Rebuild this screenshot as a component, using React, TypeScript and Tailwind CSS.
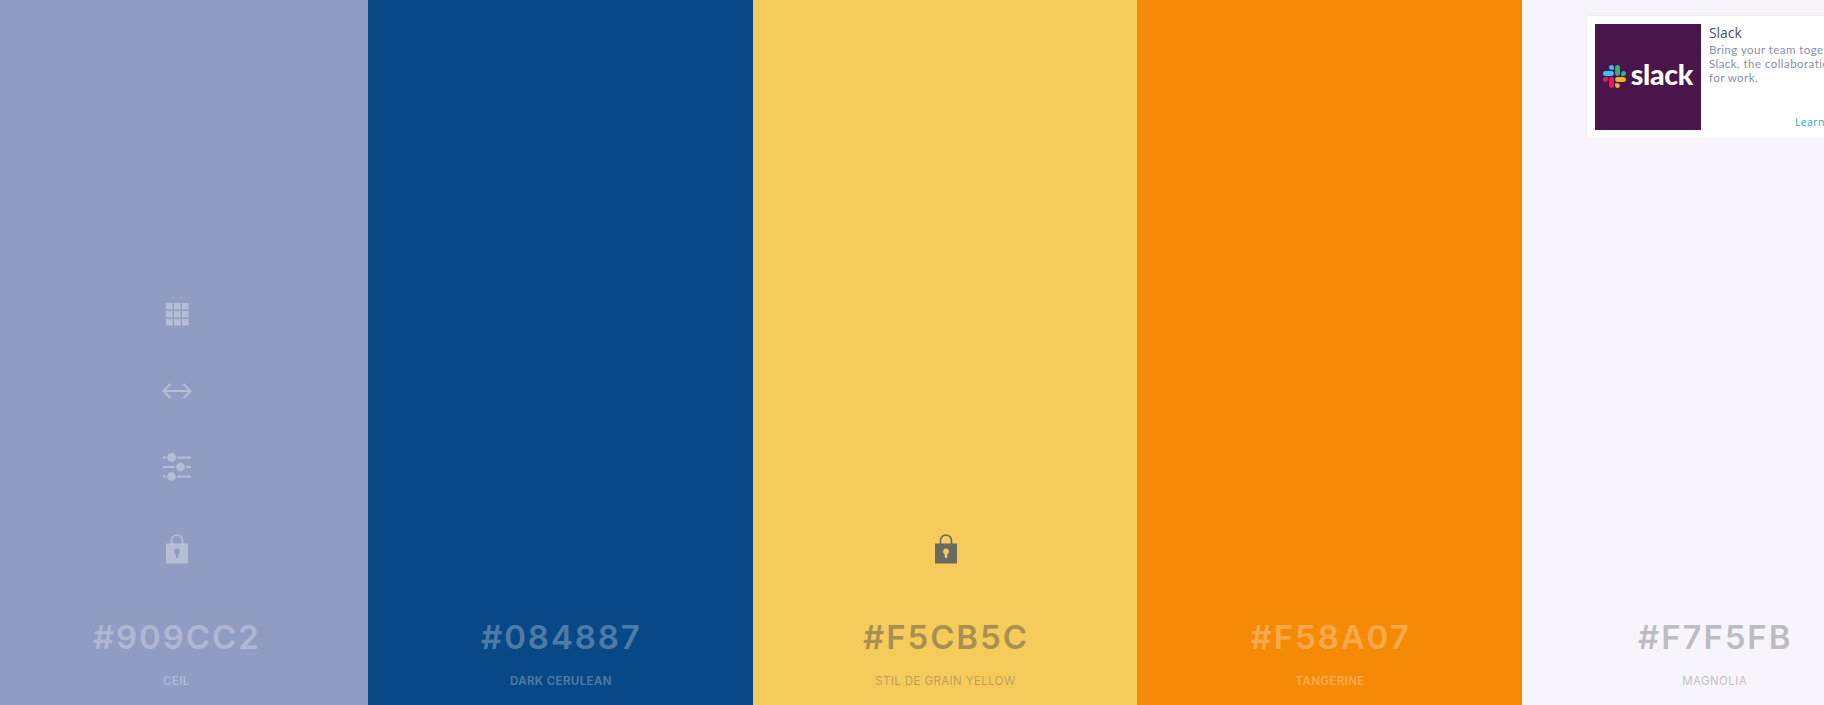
import React from "react";

const Grid = () => (
  <svg width="23" height="23" viewBox="0 0 23 23" fill="currentColor">
    {[0, 8, 16].map((y) =>
      [0, 8, 16].map((x) => <rect key={`${x}-${y}`} x={x} y={y} width="6.6" height="6.6" rx="0.6" />)
    )}
  </svg>
);

const Arrows = () => (
  <svg width="30" height="20" viewBox="0 0 30 20" fill="none" stroke="currentColor" strokeWidth="2">
    <path d="M1.5 10H28.5M8.5 3L1.5 10L8.5 17M21.5 3L28.5 10L21.5 17" />
  </svg>
);

const Sliders = () => (
  <svg width="28" height="28" viewBox="0 0 28 28" fill="currentColor">
    <rect x="0" y="3.5" width="3" height="2" />
    <rect x="14" y="3.5" width="14" height="2" />
    <rect x="0" y="13" width="12" height="2" />
    <rect x="23" y="13" width="5" height="2" />
    <rect x="0" y="22.5" width="3" height="2" />
    <rect x="14" y="22.5" width="14" height="2" />
    <circle cx="8.5" cy="4.5" r="4.4" />
    <circle cx="17.5" cy="14" r="4.4" />
    <circle cx="8.5" cy="23.5" r="4.4" />
  </svg>
);

const Lock = () => (
  <svg width="22" height="30" viewBox="0 0 22 30" fill="none">
    <path d="M5.5 11V6.5a5.5 5.5 0 0 1 11 0V11" stroke="currentColor" strokeWidth="1.6" />
    <path
      fillRule="evenodd"
      d="M0 9.5H22V29.5H0ZM11 14.5a3 3 0 0 0-1.5 5.6L10 24h2l.5-3.9A3 3 0 0 0 11 14.5Z"
      fill="currentColor"
    />
  </svg>
);

const SlackMark = () => (
  <svg width="23" height="23" viewBox="0 0 122.8 122.8">
    <path fill="#E01E5A" d="M25.8 77.6c0 7.1-5.8 12.9-12.9 12.9S0 84.7 0 77.6s5.8-12.9 12.9-12.9h12.9v12.9zM32.3 77.6c0-7.1 5.8-12.9 12.9-12.9s12.9 5.8 12.9 12.9v32.3c0 7.1-5.8 12.9-12.9 12.9s-12.9-5.8-12.9-12.9V77.6z" />
    <path fill="#36C5F0" d="M45.2 25.8c-7.1 0-12.9-5.8-12.9-12.9S38.1 0 45.2 0s12.9 5.8 12.9 12.9v12.9H45.2zM45.2 32.3c7.1 0 12.9 5.8 12.9 12.9s-5.8 12.9-12.9 12.9H12.9C5.8 58.1 0 52.3 0 45.2s5.8-12.9 12.9-12.9h32.3z" />
    <path fill="#2EB67D" d="M97 45.2c0-7.1 5.8-12.9 12.9-12.9s12.9 5.8 12.9 12.9-5.8 12.9-12.9 12.9H97V45.2zM90.5 45.2c0 7.1-5.8 12.9-12.9 12.9s-12.9-5.8-12.9-12.9V12.9C64.7 5.8 70.5 0 77.6 0s12.9 5.8 12.9 12.9v32.3z" />
    <path fill="#ECB22E" d="M77.6 97c7.1 0 12.9 5.8 12.9 12.9s-5.8 12.9-12.9 12.9-12.9-5.8-12.9-12.9V97h12.9zM77.6 90.5c-7.1 0-12.9-5.8-12.9-12.9s5.8-12.9 12.9-12.9h32.3c7.1 0 12.9 5.8 12.9 12.9s-5.8 12.9-12.9 12.9H77.6z" />
  </svg>
);

type C = { bg: string; hex: string; name: string; hexCls: string; nameCls: string; weight: string };

const cols: C[] = [
  { bg: "bg-[#909CC2]", hex: "#909CC2", name: "CEIL", hexCls: "text-white/30", nameCls: "text-white/30", weight: "font-semibold" },
  { bg: "bg-[#084887]", hex: "#084887", name: "DARK CERULEAN", hexCls: "text-white/30", nameCls: "text-white/30", weight: "font-semibold" },
  { bg: "bg-[#F5CB5C]", hex: "#F5CB5C", name: "STIL DE GRAIN YELLOW", hexCls: "text-[#2b2d42]/40", nameCls: "text-[#2b2d42]/30", weight: "font-normal" },
  { bg: "bg-[#F58A07]", hex: "#F58A07", name: "TANGERINE", hexCls: "text-white/30", nameCls: "text-white/30", weight: "font-semibold" },
  { bg: "bg-[#F7F5FB]", hex: "#F7F5FB", name: "MAGNOLIA", hexCls: "text-[#2b2d42]/30", nameCls: "text-[#2b2d42]/30", weight: "font-normal" },
];

export default function App() {
  return (
    <div className="h-[705px] w-[1824px] overflow-hidden font-['Inter',sans-serif]">
      <div className="-ml-[16.5px] flex h-full w-[1923px]">
        {cols.map((c, i) => (
          <div key={c.hex} className={`relative flex h-full w-[384.6px] shrink-0 flex-col items-center justify-end ${c.bg}`}>
            {i === 0 && (
              <div className="ml-[3px] flex flex-col items-center text-white/35">
                <div className="flex h-[76px] items-center"><Grid /></div>
                <div className="flex h-[77px] items-center"><Arrows /></div>
                <div className="flex h-[76px] items-center"><Sliders /></div>
              </div>
            )}
            <div className={`mt-[28px] ml-[3px] flex h-[32px] items-center ${i === 0 ? "text-white/35" : i === 2 ? "text-[#6b6a60]" : "text-transparent"}`}>
              <Lock />
            </div>
            <div className={`mt-[52px] ml-[2px] h-[40px] text-[33px] leading-[40px] font-semibold tracking-[1.9px] ${c.hexCls}`}>{c.hex}</div>
            <div className={`mt-[16px] mb-[16px] ml-[1px] h-[16px] text-[11.5px] leading-[16px] tracking-[0.4px] ${c.weight} ${c.nameCls}`}>{c.name}</div>
            {i === 4 && (
              <div className="absolute top-[16px] left-[65px] flex h-[122px] w-[330px] gap-2 rounded bg-white p-2 shadow-[0_0_0_1px_rgba(0,0,0,0.02)]">
                <div className="flex h-[106px] w-[106px] shrink-0 items-center justify-center gap-[5px] bg-[#4A154B] pb-[1px]">
                  <SlackMark />
                  <span className="-mt-[4px] font-['Lato',sans-serif] text-[28.5px] leading-none font-black tracking-[-0.3px] text-white">slack</span>
                </div>
                <div className="relative grow font-['Open_Sans',sans-serif]">
                  <div className="text-[14px] leading-[18px] text-[#4a4e5e]">Slack</div>
                  <div className="mt-[1px] font-['Lato',sans-serif] text-[11.5px] leading-[14px] tracking-[0.45px] text-[#8a8fa3]">
                    Bring your team together with<br />Slack, the collaboration hub<br />for work.
                  </div>
                  <div className="absolute bottom-[1px] left-[86px] text-[10.5px] leading-[14px] tracking-[0.4px] text-[#2d9cdb]">Learn more</div>
                </div>
              </div>
            )}
          </div>
        ))}
      </div>
    </div>
  );
}
